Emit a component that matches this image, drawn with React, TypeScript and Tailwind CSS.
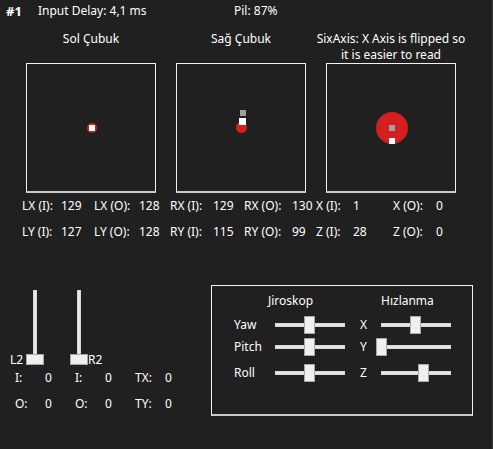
import React from "react";

function StickBox({ children }: { children?: React.ReactNode }) {
  return (
    <div className="relative w-[130px] h-[130px] border border-[#f2f2f2] border-b-2 border-b-[#c8c8c8]">
      {children}
    </div>
  );
}

function HSlider({ pos }: { pos: number }) {
  // pos: thumb left offset in px, relative to the track
  return (
    <div className="relative w-[70px] h-[18px]">
      <div className="absolute left-0 right-0 top-[7px] h-[4px] bg-[#e7e7e7] border border-[#d6d6d6]" />
      <div
        className="absolute top-0 w-[11px] h-[18px] bg-[#f0f0f0] border border-[#a8a8a8]"
        style={{ left: pos }}
      />
    </div>
  );
}

function VSlider() {
  return (
    <div className="relative w-[18px] h-[75px]">
      <div className="absolute left-[7px] top-0 bottom-[6px] w-[4px] bg-[#e7e7e7] border border-[#d6d6d6]" />
      <div className="absolute bottom-0 left-0 w-[18px] h-[11px] bg-[#f0f0f0] border border-[#a8a8a8]" />
    </div>
  );
}

const statRows = [
  ["LX (I):", "129", "LX (O):", "128", "RX (I):", "129", "RX (O):", "130", "X (I):", "1", "X (O):", "0"],
  ["LY (I):", "127", "LY (O):", "128", "RY (I):", "115", "RY (O):", "99", "Z (I):", "28", "Z (O):", "0"],
];

const gyro = [
  { label: "Yaw", g: 29, acc: "X", a: 29, mt: "mt-[7px]" },
  { label: "Pitch", g: 29, acc: "Y", a: -5, mt: "mt-[4px]" },
  { label: "Roll", g: 29, acc: "Z", a: 37, mt: "mt-[8px]" },
];

export default function App() {
  return (
    <div className="relative w-[493px] h-[449px] bg-[#202020] text-white text-[12px] leading-[16px] font-['Noto_Sans',sans-serif] overflow-hidden border-r border-r-[#3a3a3a]">
      {/* top bar */}
      <div className="flex items-center h-[22px] pl-[6px]">
        <span className="w-[32px] font-bold text-[13px]">#1</span>
        <span className="w-[196px]">Input Delay: 4,1 ms</span>
        <span>Pil: 87%</span>
      </div>

      {/* sticks */}
      <div className="flex gap-[20px] pl-[26px] mt-[9px]">
        <div className="w-[130px]">
          <div className="h-[32px] text-center">Sol Çubuk</div>
          <StickBox>
            <div className="absolute left-[60px] top-[59px] w-[10px] h-[10px] rounded-full bg-[#d31f1f] flex items-center justify-center">
              <div className="w-[6px] h-[6px] bg-white" />
            </div>
          </StickBox>
        </div>
        <div className="w-[130px]">
          <div className="h-[32px] text-center">Sağ Çubuk</div>
          <StickBox>
            <div className="absolute left-[63px] top-[46px] w-[6px] h-[6px] bg-[#a0a0a0]" />
            <div className="absolute left-[59px] top-[58px] w-[11px] h-[11px] rounded-full bg-[#d31f1f]" />
            <div className="absolute left-[62px] top-[54px] w-[7px] h-[7px] bg-white" />
          </StickBox>
        </div>
        <div className="w-[130px]">
          <div className="h-[32px] text-center whitespace-nowrap -mx-[10px]">
            SixAxis: X Axis is flipped so
            <br />
            it is easier to read
          </div>
          <StickBox>
            <div className="absolute left-[49px] top-[48px] w-[32px] h-[32px] rounded-full bg-[#d31f1f]" />
            <div className="absolute left-[62px] top-[61px] w-[6px] h-[6px] bg-[#a0a0a0]" />
            <div className="absolute left-[62px] top-[74px] w-[6px] h-[6px] bg-white" />
          </StickBox>
        </div>
      </div>

      {/* stick stats */}
      <div className="grid grid-cols-[39px_33px_45px_31px_43px_31px_48px_24px_37px_40px_43px_20px] auto-rows-[26px] items-center pl-[22px] whitespace-nowrap">
        {statRows.flat().map((t, i) => (
          <span key={i}>{t}</span>
        ))}
      </div>

      {/* bottom */}
      <div className="flex mt-[40px]">
        <div className="w-[211px] pt-[5px]">
          <div className="flex items-end pl-[10px]">
            <span className="w-[16px] h-[11px] flex items-center">L2</span>
            <VSlider />
            <div className="w-[26px]" />
            <VSlider />
            <span className="h-[11px] flex items-center">R2</span>
          </div>
          <div className="grid grid-cols-[30px_30px_30px_30px_30px_30px] auto-rows-[26px] items-center pl-[15px]">
            <span>I:</span>
            <span>0</span>
            <span>I:</span>
            <span>0</span>
            <span>TX:</span>
            <span>0</span>
            <span>O:</span>
            <span>0</span>
            <span>O:</span>
            <span>0</span>
            <span>TY:</span>
            <span>0</span>
          </div>
        </div>

        <div className="w-[262px] h-[131px] border border-[#f2f2f2] border-b-2 border-b-[#c8c8c8] pl-[22px] pt-[7px]">
          <div className="flex">
            <span className="ml-[34px] w-[113px]">Jiroskop</span>
            <span>Hızlanma</span>
          </div>
          {gyro.map((r) => (
            <div key={r.label} className={`flex items-center ${r.mt}`}>
              <span className="w-[41px]">{r.label}</span>
              <HSlider pos={r.g} />
              <span className="ml-[15px] w-[21px]">{r.acc}</span>
              <HSlider pos={r.a} />
            </div>
          ))}
        </div>
      </div>
    </div>
  );
}
